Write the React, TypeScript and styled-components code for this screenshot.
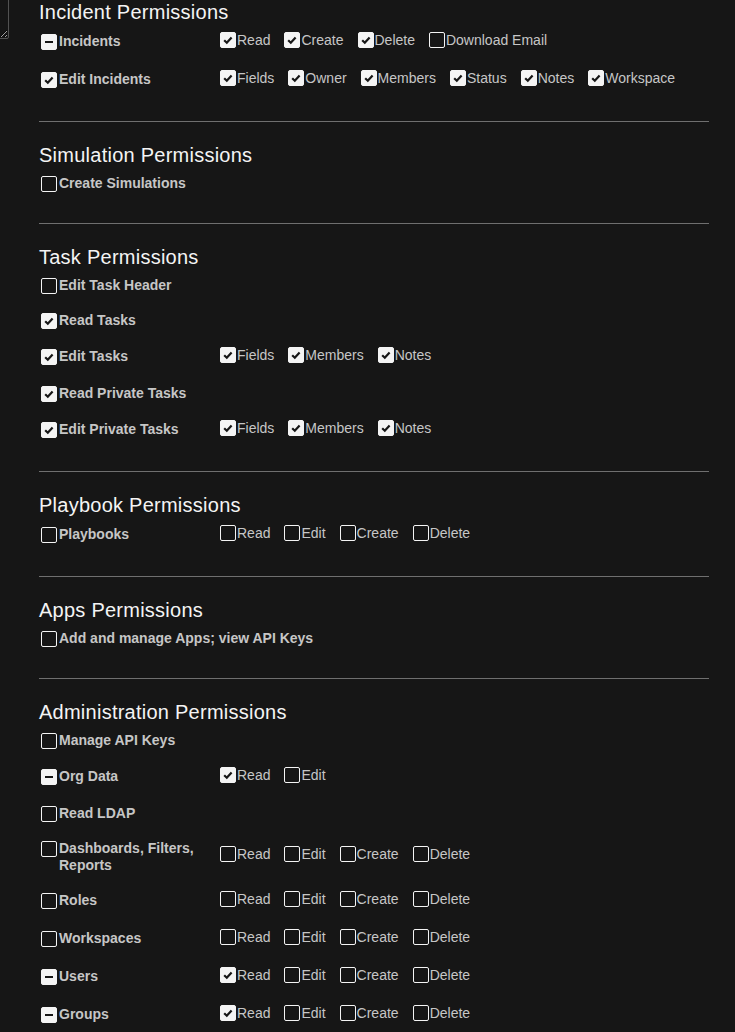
import React from 'react';
import styled, { createGlobalStyle } from 'styled-components';

type CheckState = 'on' | 'off' | 'mixed';
type Opt = [string, boolean];
type RowData = { label: string; state: CheckState; options?: Opt[] };
type SectionData = { title: string; rows: RowData[] };

const all = (names: string[], on: boolean): Opt[] => names.map((n) => [n, on]);
const RECD = ['Read', 'Edit', 'Create', 'Delete'];

const sections: SectionData[] = [
  {
    title: 'Incident Permissions',
    rows: [
      { label: 'Incidents', state: 'mixed', options: [['Read', true], ['Create', true], ['Delete', true], ['Download Email', false]] },
      { label: 'Edit Incidents', state: 'on', options: all(['Fields', 'Owner', 'Members', 'Status', 'Notes', 'Workspace'], true) },
    ],
  },
  { title: 'Simulation Permissions', rows: [{ label: 'Create Simulations', state: 'off' }] },
  {
    title: 'Task Permissions',
    rows: [
      { label: 'Edit Task Header', state: 'off' },
      { label: 'Read Tasks', state: 'on' },
      { label: 'Edit Tasks', state: 'on', options: all(['Fields', 'Members', 'Notes'], true) },
      { label: 'Read Private Tasks', state: 'on' },
      { label: 'Edit Private Tasks', state: 'on', options: all(['Fields', 'Members', 'Notes'], true) },
    ],
  },
  { title: 'Playbook Permissions', rows: [{ label: 'Playbooks', state: 'off', options: all(RECD, false) }] },
  { title: 'Apps Permissions', rows: [{ label: 'Add and manage Apps; view API Keys', state: 'off' }] },
  {
    title: 'Administration Permissions',
    rows: [
      { label: 'Manage API Keys', state: 'off' },
      { label: 'Org Data', state: 'mixed', options: [['Read', true], ['Edit', false]] },
      { label: 'Read LDAP', state: 'off' },
      { label: 'Dashboards, Filters, Reports', state: 'off', options: all(RECD, false) },
      { label: 'Roles', state: 'off', options: all(RECD, false) },
      { label: 'Workspaces', state: 'off', options: all(RECD, false) },
      { label: 'Users', state: 'mixed', options: [['Read', true], ['Edit', false], ['Create', false], ['Delete', false]] },
      { label: 'Groups', state: 'mixed', options: [['Read', true], ['Edit', false], ['Create', false], ['Delete', false]] },
    ],
  },
];

const GlobalStyle = createGlobalStyle`
  html, body {
    margin: 0;
    padding: 0;
    background: #161616;
  }
  body {
    font-family: "Liberation Sans", Arial, sans-serif;
    color: #c6c6c6;
    overflow: hidden;
  }
`;

const Page = styled.div`
  display: flex;
  align-items: flex-start;
  min-height: 1032px;
`;

const Side = styled.div`
  flex: 0 0 9px;
  width: 9px;
`;

const NotesArea = styled.textarea`
  display: block;
  box-sizing: border-box;
  width: 120px;
  height: 60px;
  margin: -21px 0 0 -111px;
  background: #161616;
  color: #c6c6c6;
  border: 1px solid #525252;
  border-radius: 0 0 2px 0;
  resize: both;
  color-scheme: dark;
`;

const Content = styled.main`
  margin-left: 30px;
  width: 670px;
`;

const Section = styled.section`
  padding: 22px 0;
  border-bottom: 1px solid #6f6f6f;
  &:first-child {
    padding-top: 1px;
  }
`;

const Heading = styled.h3`
  margin: 0;
  font-size: 20px;
  line-height: 22px;
  font-weight: 400;
  letter-spacing: 0.25px;
  color: #f4f4f4;
`;

const Row = styled.div`
  display: flex;
  align-items: center;
  padding: 8.5px 0;
`;

const Main = styled.label<{ $fixed: boolean }>`
  display: flex;
  align-items: flex-start;
  gap: 2px;
  box-sizing: border-box;
  min-height: 18px;
  padding-left: 2px;
  ${(p) => (p.$fixed ? 'flex: 0 0 181px; padding-right: 14px;' : 'flex: 0 0 auto;')}
`;

const MainText = styled.span`
  font-size: 14px;
  font-weight: 700;
  line-height: 17px;
  color: #c6c6c6;
`;

const Options = styled.div`
  display: flex;
  align-items: center;
  margin: -1px 0 4px;
`;

const Option = styled.label`
  display: flex;
  align-items: center;
  gap: 1px;
  margin-right: 14px;
  font-size: 14px;
  line-height: 18px;
  color: #c6c6c6;
  white-space: nowrap;
`;

const Box = styled.span<{ $state: CheckState; $top?: boolean }>`
  flex: 0 0 16px;
  width: 16px;
  height: 16px;
  box-sizing: border-box;
  margin-top: ${(p) => (p.$top ? '1px' : '0')};
  border-radius: 2px;
  display: flex;
  align-items: center;
  justify-content: center;
  background: ${(p) => (p.$state === 'off' ? 'transparent' : '#f4f4f4')};
  border: 1px solid #f4f4f4;
`;

const Check: React.FC<{ state: CheckState; top?: boolean }> = ({ state, top }) => (
  <Box $state={state} $top={top}>
    {state === 'on' && (
      <svg width="14" height="14" viewBox="0 0 14 14" aria-hidden>
        <path d="M3.2 7.3 L5.8 9.8 L10.6 4.6" fill="none" stroke="#161616" strokeWidth="2.2" strokeLinecap="butt" strokeLinejoin="miter" />
      </svg>
    )}
    {state === 'mixed' && (
      <svg width="14" height="14" viewBox="0 0 14 14" aria-hidden>
        <rect x="3" y="6" width="8" height="2" fill="#161616" />
      </svg>
    )}
  </Box>
);

const PermissionRow: React.FC<{ row: RowData }> = ({ row }) => (
  <Row>
    <Main $fixed={!!row.options}>
      <Check state={row.state} top />
      <MainText>{row.label}</MainText>
    </Main>
    {row.options && (
      <Options>
        {row.options.map(([name, on]) => (
          <Option key={name}>
            <Check state={on ? 'on' : 'off'} />
            {name}
          </Option>
        ))}
      </Options>
    )}
  </Row>
);

export default function App() {
  return (
    <>
      <GlobalStyle />
      <Page>
        <Side>
          <NotesArea aria-label="notes" />
        </Side>
        <Content>
          {sections.map((s) => (
            <Section key={s.title}>
              <Heading>{s.title}</Heading>
              {s.rows.map((r) => (
                <PermissionRow key={r.label} row={r} />
              ))}
            </Section>
          ))}
        </Content>
      </Page>
    </>
  );
}
